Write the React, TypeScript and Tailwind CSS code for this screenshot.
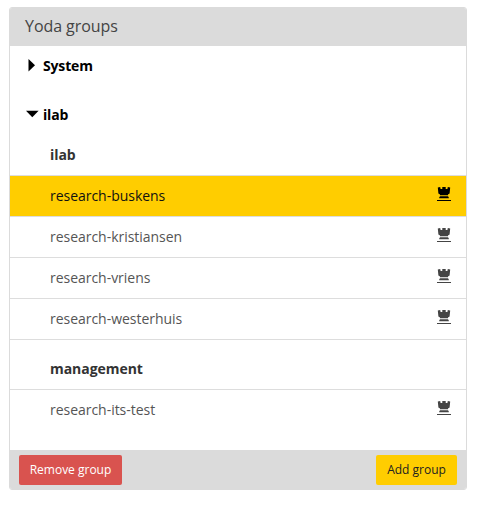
type RowProps = { name: string; selected?: boolean };

function Tower() {
  return (
    <svg className="mt-[11px] h-[14px] w-[14px] shrink-0" viewBox="0 0 14 14" fill="currentColor" aria-hidden="true">
      <path d="M0.8 0.4 3.2 0 3.6 2H5.3V0H8.7V2H10.4L10.8 0 13.2 0.4 12.6 6.4 11 7.4V8.3H3V7.4L1.4 6.4Z" />
      <path d="M3 9.3H11L11.8 10.4V11.3H2.2V10.4Z" />
      <path d="M0 13H14V14H0Z" />
    </svg>
  );
}

function Row({ name, selected = false }: RowProps) {
  return (
    <li
      className={
        selected
          ? "flex h-[41px] justify-between border-t border-[#ddd] bg-[#ffcd00] pl-10 pr-[15px] text-[#111]"
          : "flex h-[41px] justify-between border-t border-[#ddd] pl-10 pr-[15px] text-[#555]"
      }
    >
      <span className="leading-[40px] tracking-[-0.03px]">{name}</span>
      <span className={selected ? "text-black" : "text-[#444]"}>
        <Tower />
      </span>
    </li>
  );
}

export default function App() {
  return (
    <main className="h-[505px] w-[482px] bg-white pl-[9px] pt-[7px] font-['Open_Sans',sans-serif] text-[14px]">
      <section className="flex h-[483px] w-[458px] flex-col overflow-hidden rounded-[3px] border border-[#dbdbdb] bg-white">
        <h3 className="h-[38px] shrink-0 bg-[#dbdbdb] pl-[15px] text-[16px] leading-[37px] tracking-[-0.06px] text-[#444]">Yoda groups</h3>
        <div className="flex h-[39px] shrink-0 items-center pl-4 font-bold tracking-[-0.15px] text-black">
          <svg className="mr-1 h-[14px] w-[13px]" viewBox="0 0 13 14" aria-hidden="true">
            <path d="M2.5 0 9 6.2 2.5 12.4Z" />
          </svg>
          System
        </div>
        <div className="mt-[10px] flex h-[39px] shrink-0 items-center pl-4 font-bold tracking-[-0.15px] text-black">
          <svg className="mr-1 h-[14px] w-[13px]" viewBox="0 0 13 14" aria-hidden="true">
            <path d="M0 2.8H12.6L6.3 9.2Z" />
          </svg>
          ilab
        </div>
        <h4 className="mt-px h-10 shrink-0 pl-10 font-bold leading-10 tracking-[-0.05px] text-[#333]">ilab</h4>
        <ul>
          <Row name="research-buskens" selected />
          <Row name="research-kristiansen" />
          <Row name="research-vriens" />
          <Row name="research-westerhuis" />
        </ul>
        <h4 className="h-[50px] shrink-0 border-t border-[#ddd] pl-10 pt-[9px] font-bold leading-10 tracking-[-0.05px] text-[#333]">management</h4>
        <ul>
          <Row name="research-its-test" />
        </ul>
        <footer className="mt-auto flex h-[39px] shrink-0 justify-between bg-[#dbdbdb] px-[9px] pt-[5px] text-[12px]">
          <button className="h-[30px] w-[103px] rounded-[2px] bg-[#d9534f] text-white">Remove group</button>
          <button className="h-[30px] w-[81px] rounded-[2px] bg-[#ffcd00] text-[#222]">Add group</button>
        </footer>
      </section>
    </main>
  );
}
